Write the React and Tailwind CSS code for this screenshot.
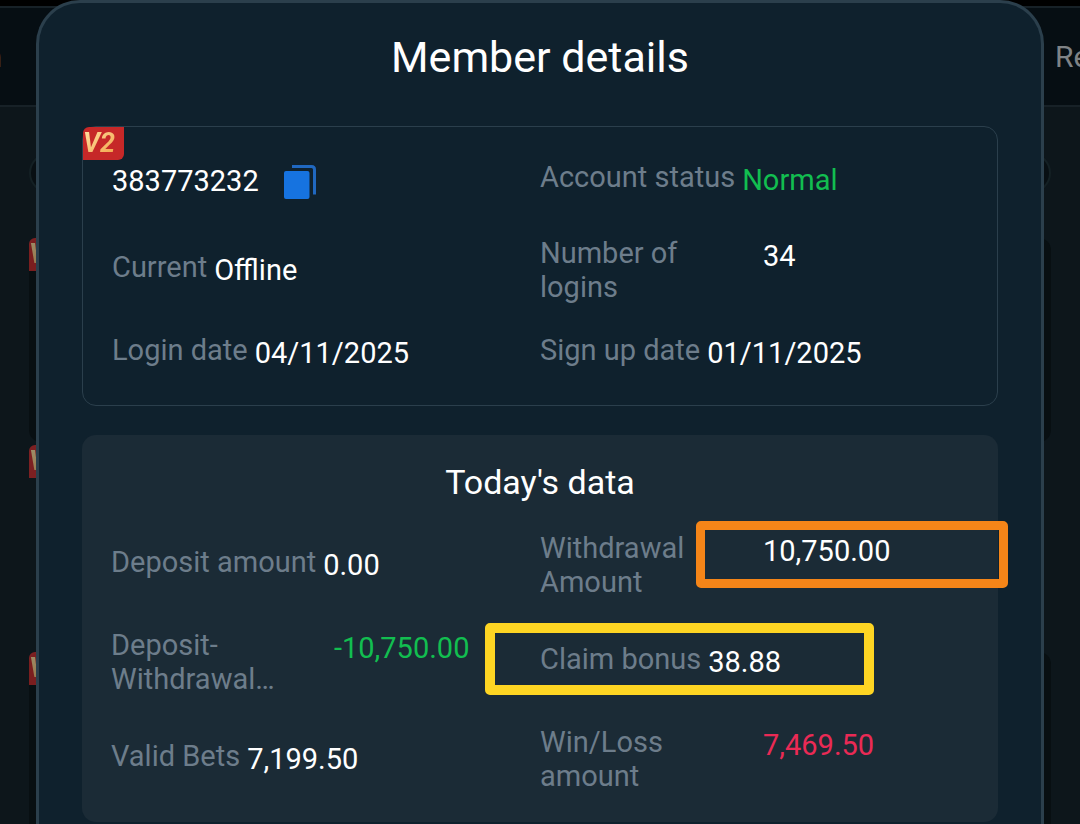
import React from "react";

const memberInfo = [
  { label: "Account status", value: "Normal", color: "text-[#12be50]" },
  { label: "Current", value: "Offline" },
  { label: "Number of logins", value: "34" },
  { label: "Login date", value: "04/11/2025" },
  { label: "Sign up date", value: "01/11/2025" },
];

const todayData = [
  { label: "Deposit amount", value: "0.00" },
  { label: "Withdrawal Amount", value: "10,750.00", mark: "orange" },
  { label: "Deposit-Withdrawal…", value: "-10,750.00", color: "text-[#12be50]" },
  { label: "Claim bonus", value: "38.88", mark: "yellow" },
  { label: "Valid Bets", value: "7,199.50" },
  { label: "Win/Loss amount", value: "7,469.50", color: "text-[#ea2a55]" },
];

// highlight frames drawn over a cell
const marks = {
  orange: "left-[156px] -right-[39px] -top-[10px] h-[67px] border-9 border-[#f58518]",
  yellow: "-left-[55px] right-[95px] -top-[5px] h-[72px] border-10 border-[#fed523]",
};

function LevelBadge({ className = "" }) {
  return (
    <span
      className={`flex h-[33px] w-[41px] items-start rounded-tl-md rounded-br-md bg-[#c62828] ${className}`}
    >
      <b className="bg-linear-to-br from-[#ffe6a8] to-[#ee9a35] bg-clip-text pr-1 text-[27px] leading-[32px] italic text-transparent">
        V2
      </b>
    </span>
  );
}

function CopyIcon() {
  return (
    <svg width="32" height="34" viewBox="0 0 32 34" aria-hidden="true">
      <rect x="0" y="6" width="25.500" height="28" rx="2" fill="#1673e0" />
      <path d="M8 1.500H27.500Q30.500 1.500 30.500 4.500V29.500" fill="none" stroke="#2068c0" strokeWidth="3" />
    </svg>
  );
}

function Field({ label, value, color = "text-white", mark }) {
  return (
    <div className="relative flex items-center">
      <div className="flex w-full items-start gap-[7px]">
        <dt className="max-w-[216px] leading-[34px] text-[#6d7d8b]">{label}</dt>
        <dd className={`leading-[40px] ${color}`}>{value}</dd>
      </div>
      {mark && <span className={`absolute rounded-[5px] ${marks[mark]}`} />}
    </div>
  );
}

function PageBehind() {
  return (
    <div className="flex h-full flex-col bg-[#0d161b]" aria-hidden="true">
      <nav className="flex h-[107px] shrink-0 flex-col bg-black pt-[6px]">
        <div className="flex grow items-center justify-between border-y-2 border-[#172127] bg-[#060e13] text-[30px] text-[#7f8386]">
          <span className="flex w-[2px] justify-end">n</span>
          <span className="w-[25px]">Re</span>
        </div>
      </nav>
      <div className="px-[29px]">
        <div className="mt-[46px] h-[40px] rounded-full border-2 border-[#142024] bg-[#080f13]" />
        <div className="mt-[45px] flex flex-col gap-[3px]">
          <div className="h-[204px] rounded-xl bg-[#080f12]">
            <LevelBadge className="opacity-60" />
          </div>
          <div className="h-[204px]">
            <LevelBadge className="opacity-60" />
          </div>
          <div className="h-[204px] rounded-xl bg-[#080f12]">
            <LevelBadge className="opacity-60" />
          </div>
        </div>
      </div>
    </div>
  );
}

export default function App() {
  return (
    <div className="relative h-screen overflow-hidden bg-black font-[Roboto,sans-serif]">
      <PageBehind />

      <div
        role="dialog"
        aria-labelledby="dialog-title"
        className="absolute inset-x-[36px] top-0 rounded-t-[44px] border-3 border-b-0 border-[#2b3f4c] bg-[#0f212d] px-[43px] pt-[30px] pb-12 text-[29px]"
      >
        <h1 id="dialog-title" className="text-center text-[43px] leading-[48px] text-white">
          Member details
        </h1>

        <section className="relative mt-[45px] rounded-[14px] border border-[#2b3f4c] px-[29px] pt-[26px] pb-[32px]">
          <LevelBadge className="absolute top-0 left-0" />
          <dl className="grid grid-cols-2 gap-y-[29px]">
            <div className="flex h-[54px] items-center gap-[25px] pt-1 text-white">
              <span>383773232</span>
              <button type="button" aria-label="Copy member ID" className="cursor-pointer">
                <CopyIcon />
              </button>
            </div>
            {memberInfo.map((item) => (
              <Field key={item.label} {...item} />
            ))}
          </dl>
        </section>

        <section className="mt-[29px] rounded-[14px] bg-[#1b2b36] px-[29px] pt-[27px] pb-[29px]">
          <h2 className="text-center text-[34px] leading-[40px] text-white">Today's data</h2>
          <dl className="mt-[29px] grid grid-cols-2 gap-y-[29px]">
            {todayData.map((item) => (
              <Field key={item.label} {...item} />
            ))}
          </dl>
        </section>
      </div>
    </div>
  );
}
